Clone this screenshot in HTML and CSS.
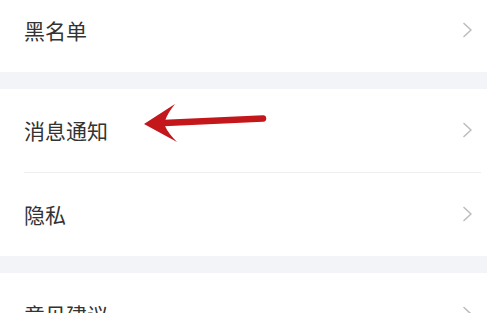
FILE: index.html
```html
<!DOCTYPE html>
<html lang="zh">
<head>
<meta charset="utf-8">
<title>设置</title>
<link rel="stylesheet" href="styles.css">
</head>
<body>
<div class="page">
  <div class="list">
    <div class="row">
      <span class="label">黑名单</span>
      <svg class="chev" width="11" height="16" viewBox="0 0 11 16"><path d="M2 1.5 L9 8 L2 14.5" fill="none" stroke="#bdbdbd" stroke-width="1.6" stroke-linecap="round" stroke-linejoin="round"/></svg>
    </div>
    <div class="gap"></div>
    <div class="row">
      <span class="label">消息通知</span>
      <svg class="chev" width="11" height="16" viewBox="0 0 11 16"><path d="M2 1.5 L9 8 L2 14.5" fill="none" stroke="#bdbdbd" stroke-width="1.6" stroke-linecap="round" stroke-linejoin="round"/></svg>
    </div>
    <div class="divider"></div>
    <div class="row">
      <span class="label">隐私</span>
      <svg class="chev" width="11" height="16" viewBox="0 0 11 16"><path d="M2 1.5 L9 8 L2 14.5" fill="none" stroke="#bdbdbd" stroke-width="1.6" stroke-linecap="round" stroke-linejoin="round"/></svg>
    </div>
    <div class="gap"></div>
    <div class="row">
      <span class="label">意见建议</span>
      <svg class="chev" width="11" height="16" viewBox="0 0 11 16"><path d="M2 1.5 L9 8 L2 14.5" fill="none" stroke="#bdbdbd" stroke-width="1.6" stroke-linecap="round" stroke-linejoin="round"/></svg>
    </div>
  </div>
  <svg class="arrow" width="130" height="45" viewBox="0 0 130 45">
    <path d="M24 23 L123 18.5" stroke="#c4171b" stroke-width="6.5" stroke-linecap="round" fill="none"/>
    <path d="M4 24 L35 4 Q27 14 25 21 L25 26 Q28 33 37 42 Z" fill="#c4171b"/>
  </svg>
</div>
</body>
</html>
```

FILE: styles.css
```css
html, body {
  margin: 0;
  padding: 0;
  background: #ffffff;
}
body {
  width: 487px;
  height: 313px;
  overflow: hidden;
  font-family: "Noto Sans CJK SC", "Noto Sans", sans-serif;
}
.page {
  position: relative;
  width: 487px;
  height: 313px;
  overflow: hidden;
}
.list {
  margin-top: -11px;
}
.row {
  height: 83px;
  display: flex;
  align-items: center;
  justify-content: space-between;
  padding: 0 14px 0 24px;
  background: #ffffff;
}
.label {
  font-size: 21px;
  color: #333333;
  line-height: 1;
}
.chev {
  display: block;
  margin-top: -2px;
}
.gap {
  height: 17px;
  background: #f3f4f7;
}
.divider {
  height: 1px;
  margin: 0 6px 0 24px;
  background: #efefef;
}
.arrow {
  position: absolute;
  left: 140px;
  top: 100px;
}
```
